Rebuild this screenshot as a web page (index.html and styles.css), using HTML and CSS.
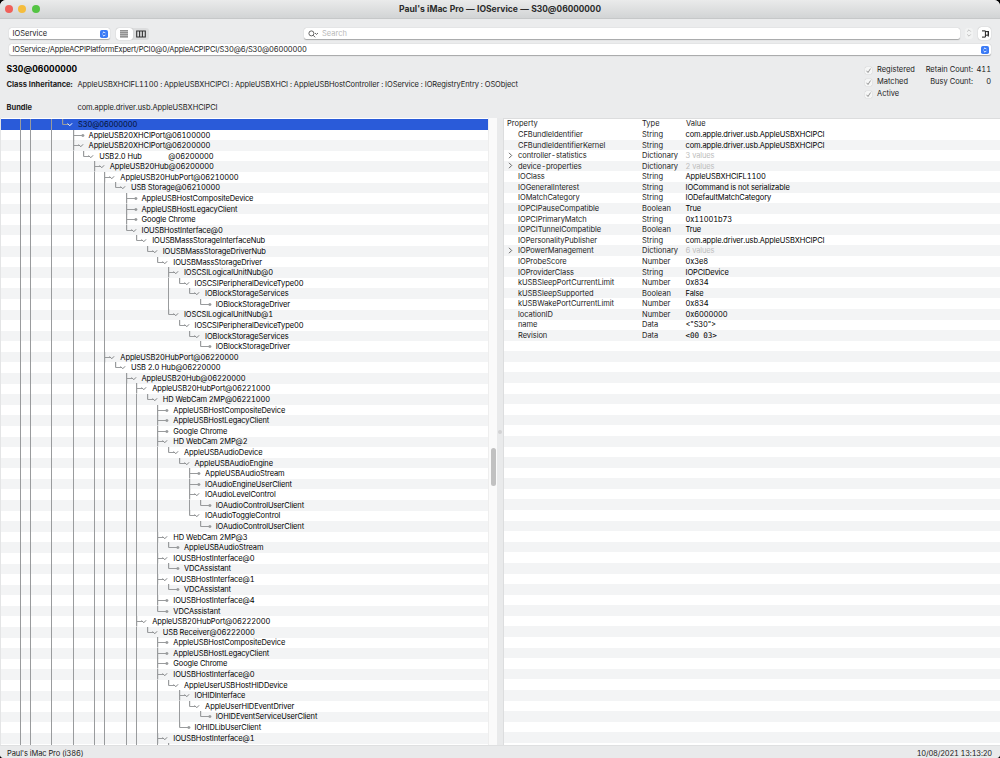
FILE: index.html
```html
<!DOCTYPE html>
<html lang="en">
<head>
    <meta charset="UTF-8">
    <meta name="viewport" content="width=device-width, initial-scale=1.0">
    <title>Paul's iMac Pro — IOService — S30@06000000</title>
    <link rel="stylesheet" href="styles.css">
</head>
<body>
    <div class="window">
        <div class="titlebar">
            <div class="lights">
                <span class="light red"></span>
                <span class="light yellow"></span>
                <span class="light green"></span>
            </div>
            <h1>Paul's iMac Pro — IOService — S30@06000000</h1>
        </div>

        <div class="toolbar">
            <div class="field plane">
                <span>IOService</span>
                <svg class="stepper" viewBox="0 0 8 8"><rect width="8" height="8" rx="1.8"/><path d="M2.6 3.2 4 1.8l1.4 1.4M2.6 4.8 4 6.2l1.4-1.4"/></svg>
            </div>
            <div class="segments">
                <span class="segment on"><svg width="8" height="8" viewBox="0 0 8 8"><path d="M0 .9h8M0 2.9h8M0 4.9h8M0 6.9h8" stroke="#4a4a4a"/></svg></span>
                <span class="segment"><svg width="10" height="8" viewBox="0 0 10 8"><path d="M.7 1h8.6v6H.7zM3.6 1v6M6.4 1v6" stroke="#333" stroke-width="1.1" fill="none"/></svg></span>
            </div>
            <div class="field search">
                <svg width="11" height="8" viewBox="0 0 11 8"><g fill="none" stroke="#555" stroke-width=".9"><circle cx="3.4" cy="3.4" r="2.5"/><path d="m5.2 5.3 2 2M7 3l1.5 1.4L10 3"/></g></svg>
                <span>Search</span>
            </div>
            <span class="updown"><svg width="6" height="10" viewBox="0 0 6 10"><path d="M1.2 3.6 3 1.8l1.8 1.8M1.2 6.4 3 8.2l1.8-1.8" fill="none" stroke="#b9b9b9" stroke-width=".9"/></svg></span>
            <span class="drawer"><svg width="8" height="8" viewBox="0 0 8 8"><path d="M1 .9h3.4v6.2H1M4.4 1.6h2.9v3.6H4.4M7.3 1v5.6" fill="none" stroke="#222" stroke-width="1"/></svg></span>
        </div>

        <div class="field path">
            <span>IOService:/AppleACPIPlatformExpert/PCI0@0/AppleACPIPCI/S30@6/S30@06000000</span>
            <svg class="stepper" viewBox="0 0 8 8"><rect width="8" height="8" rx="1.8"/><path d="M2.6 3.2 4 1.8l1.4 1.4M2.6 4.8 4 6.2l1.4-1.4"/></svg>
        </div>

        <div class="summary">
            <div class="info">
                <h2>S30@06000000</h2>
                <div class="info-row inherit"><b>Class Inheritance:</b><span>AppleUSBXHCIFL1100 : AppleUSBXHCIPCI : AppleUSBXHCI : AppleUSBHostController : IOService : IORegistryEntry : OSObject</span></div>
                <div class="info-row bundle"><b>Bundle</b><span>com.apple.driver.usb.AppleUSBXHCIPCI</span></div>
            </div>
            <div class="flags">
                <div><i class="check"><svg viewBox="0 0 7 7"><path d="m1.6 3.8 1.4 1.7L5.5 1.6"/></svg></i>Registered</div>
                <div><i class="check"><svg viewBox="0 0 7 7"><path d="m1.6 3.8 1.4 1.7L5.5 1.6"/></svg></i>Matched</div>
                <div><i class="check"><svg viewBox="0 0 7 7"><path d="m1.6 3.8 1.4 1.7L5.5 1.6"/></svg></i>Active</div>
            </div>
            <div class="counts">
                <div><span>Retain Count:</span><span class="num">411</span></div>
                <div><span>Busy Count:</span><span class="num">0</span></div>
            </div>
        </div>

        <div class="panes">
            <div class="tree" id="tree"></div>
            <div class="scroll"><div class="thumb"></div></div>
            <div class="splitter"><span></span></div>
            <div class="props">
                <div class="prop head"><span class="key">Property</span><span class="type">Type</span><span class="value">Value</span></div>
                <div class="prop-rows" id="props"></div>
            </div>
        </div>

        <div class="statusbar">
            <span class="host">Paul's iMac Pro (i386)</span>
            <span class="date">10/08/2021 13:13:20</span>
        </div>
    </div>
    <script src="script.js"></script>
</body>
</html>
```
FILE: styles.css
```css
* {
    box-sizing: border-box;
}

body {
    margin: 0;
    background: #000;
    font-family: Inter, "Liberation Sans", sans-serif;
    font-size: 7.5px;
    font-variant-numeric: tabular-nums;
    color: #222;
}

.window {
    display: flex;
    flex-direction: column;
    width: 1000px;
    height: 758px;
    overflow: hidden;
    background: #ebeced;
    border-radius: 6px 6px 4px 4px;
}

.titlebar {
    display: grid;
    grid-template-columns: 100px 1fr 100px;
    align-items: center;
    height: 19px;
    background: linear-gradient(#eaebeb, #d2d4d5);
    border-bottom: 1px solid #c6c8c9;
}

.titlebar h1 {
    margin: 0;
    text-align: center;
    font-size: 8.6px;
    font-weight: 700;
    letter-spacing: -.01px;
    color: #2b2b2b;
}

.lights {
    display: flex;
    gap: 5.3px;
    padding-left: 5px;
}

.light {
    width: 8px;
    height: 8px;
    border-radius: 50%;
}

.red { background: #f0605a; }
.yellow { background: #f5bd3d; }
.green { background: #54c443; }

.toolbar {
    display: flex;
    align-items: center;
    height: 15px;
    margin: 7px 9px 0 8.5px;
}

.field {
    display: flex;
    align-items: center;
    height: 11px;
    padding: 0 2px 0 4px;
    background: #fff;
    border-radius: 2.5px;
    box-shadow: 0 .5px 1px rgba(0, 0, 0, .3);
}

.plane {
    justify-content: space-between;
    width: 101.5px;
}

.stepper {
    width: 8px;
    height: 8px;
    flex: none;
}

.stepper rect { fill: #3b7bf6; }

.stepper path {
    fill: none;
    stroke: #fff;
    stroke-width: .9;
}

.segments {
    display: flex;
    width: 33px;
    height: 12px;
    margin-left: 6px;
    background: #dcddde;
    border-radius: 3px;
}

.segment {
    flex: 1;
    display: flex;
    align-items: center;
    justify-content: center;
}

.segment.on {
    background: #fff;
    border-radius: 3px;
    box-shadow: 0 0 1px rgba(0, 0, 0, .35);
}

.search {
    flex: 1;
    gap: 3px;
    margin-left: 155px;
    color: #b8b8b8;
}

.updown {
    display: flex;
    justify-content: center;
    width: 8px;
    height: 11px;
    margin-left: 5px;
    border-radius: 3px;
    background: #f2f3f3;
}

.drawer {
    display: flex;
    align-items: center;
    justify-content: center;
    width: 13px;
    height: 13px;
    margin-left: 5px;
    background: #fff;
    border-radius: 3.5px;
    box-shadow: 0 0 1px rgba(0, 0, 0, .35);
}

.path {
    justify-content: space-between;
    margin: 3px 9px 0 8.5px;
    letter-spacing: -.165px;
}

.summary {
    display: flex;
    height: 63px;
    padding: 8px 9px 0 6.5px;
}

.info {
    flex: 1;
}

.info h2 {
    margin: 0;
    font-size: 8.6px;
    line-height: 12px;
    font-weight: 700;
    letter-spacing: .06px;
    color: #000;
}

.info-row {
    display: flex;
    line-height: 11px;
}

.info-row b {
    width: 71px;
    font-weight: 700;
}

.info-row span { letter-spacing: -.08px; }

.inherit { margin-top: 4px; }
.bundle { margin-top: 12px; }

.flags,
.counts {
    padding-top: 1px;
    line-height: 12px;
}

.flags {
    width: 48px;
}

.flags div {
    display: flex;
    align-items: center;
}

.check {
    flex: none;
    width: 7px;
    height: 7px;
    margin-right: 5px;
    background: #f5f6f6;
    border-radius: 1.5px;
    box-shadow: 0 0 1px rgba(0, 0, 0, .3);
}

.check svg { display: block; }

.check path {
    fill: none;
    stroke: #8a8a8a;
    stroke-width: .9;
}

.counts {
    width: 78px;
}

.counts div {
    display: flex;
    justify-content: flex-end;
}

.num {
    width: 18px;
    text-align: right;
}

.panes {
    display: flex;
    height: 627px;
}

.tree,
.prop-rows {
    --row: 10.585px;
    background: repeating-linear-gradient(#f3f4f5 0 var(--row), #fff var(--row) calc(var(--row) * 2));
}

.tree {
    width: 488px;
    overflow: hidden;
    padding-top: 1px;
    background-position: 0 1px;
    border-left: 1px solid #e4e5e6;
    color: #000;
    letter-spacing: -.11px;
}

.row {
    display: flex;
    height: 10.585px;
    line-height: 11.8px;
    padding-left: 8px;
    white-space: pre;
}

.row.selected {
    background: #2a5bd9;
    color: #04102f;
}

.guide {
    flex: none;
    width: 10.6px;
}

.guide.line {
    border-left: 1.4px solid #999b9d;
}

.joint {
    flex: none;
    width: 16px;
    height: 10.585px;
    overflow: visible;
    fill: none;
    stroke: #999b9d;
}

.joint circle {
    fill: #999b9d;
    stroke: none;
}

.joint .chevron { stroke: #808284; }
.selected .chevron { stroke: #fff; }

.scroll {
    display: flex;
    justify-content: center;
    width: 9px;
    background: #fafafa;
    border-left: 1px solid #eee;
}

.thumb {
    width: 5px;
    height: 38px;
    margin-top: 330px;
    border-radius: 3px;
    background: #c1c1c1;
}

.splitter {
    display: flex;
    align-items: center;
    justify-content: center;
    width: 6px;
    background: #e9eaeb;
}

.splitter span {
    width: 4px;
    height: 4px;
    border-radius: 50%;
    background: #d3d3d4;
}

.props {
    flex: 1;
    display: flex;
    flex-direction: column;
    background: #fff;
    border-left: 1px solid #dcddde;
    border-top: 1px solid #dcddde;
}

.prop {
    display: flex;
    flex: none;
    height: 10.585px;
    line-height: 11.6px;
}

.prop.head {
    height: 10px;
    line-height: 9.6px;
    padding-left: 3px;
}

.head .key { width: 135px; }
.head .type { width: 44px; }

.prop-rows {
    flex: 1;
    background: repeating-linear-gradient(#fff 0 var(--row), #f3f4f5 var(--row) calc(var(--row) * 2));
}

.arrow {
    width: 14px;
    padding-left: 4px;
}

.arrow svg {
    display: block;
    margin-top: 1.5px;
}

.key { width: 124px; }
.type { width: 43.5px; }
.prop-rows .key { letter-spacing: -.06px; }
.prop-rows .value { color: #000; letter-spacing: -.11px; }
.prop-rows .value.dim { color: #bdbdbd; }
.prop-rows .value.mono { font-family: "DejaVu Sans Mono", monospace; font-size: 7.6px; }

.statusbar {
    display: flex;
    justify-content: space-between;
    height: 13px;
    line-height: 15px;
    padding: 0 8px 0 7px;
    background: #e9eaeb;
    border-top: 1px solid #dfe0e1;
}

.host { letter-spacing: -.1px; }
.date { letter-spacing: -.22px; }
```
FILE: script.js
```js
// depth, name, 1 when the entry has children
const entries = [
    [0, 'S30@06000000', 1],
    [1, 'AppleUSB20XHCIPort@06100000', 0],
    [1, 'AppleUSB20XHCIPort@06200000', 1],
    [2, 'USB2.0 Hub              @06200000', 1],
    [3, 'AppleUSB20Hub@06200000', 1],
    [4, 'AppleUSB20HubPort@06210000', 1],
    [5, 'USB Storage@06210000', 1],
    [6, 'AppleUSBHostCompositeDevice', 0],
    [6, 'AppleUSBHostLegacyClient', 0],
    [6, 'Google Chrome', 0],
    [6, 'IOUSBHostInterface@0', 1],
    [7, 'IOUSBMassStorageInterfaceNub', 1],
    [8, 'IOUSBMassStorageDriverNub', 1],
    [9, 'IOUSBMassStorageDriver', 1],
    [10, 'IOSCSILogicalUnitNub@0', 1],
    [11, 'IOSCSIPeripheralDeviceType00', 1],
    [12, 'IOBlockStorageServices', 1],
    [13, 'IOBlockStorageDriver', 0],
    [10, 'IOSCSILogicalUnitNub@1', 1],
    [11, 'IOSCSIPeripheralDeviceType00', 1],
    [12, 'IOBlockStorageServices', 1],
    [13, 'IOBlockStorageDriver', 0],
    [4, 'AppleUSB20HubPort@06220000', 1],
    [5, 'USB 2.0 Hub@06220000', 1],
    [6, 'AppleUSB20Hub@06220000', 1],
    [7, 'AppleUSB20HubPort@06221000', 1],
    [8, 'HD WebCam 2MP@06221000', 1],
    [9, 'AppleUSBHostCompositeDevice', 0],
    [9, 'AppleUSBHostLegacyClient', 0],
    [9, 'Google Chrome', 0],
    [9, 'HD WebCam 2MP@2', 1],
    [10, 'AppleUSBAudioDevice', 1],
    [11, 'AppleUSBAudioEngine', 1],
    [12, 'AppleUSBAudioStream', 0],
    [12, 'IOAudioEngineUserClient', 0],
    [12, 'IOAudioLevelControl', 1],
    [13, 'IOAudioControlUserClient', 0],
    [12, 'IOAudioToggleControl', 1],
    [13, 'IOAudioControlUserClient', 0],
    [9, 'HD WebCam 2MP@3', 1],
    [10, 'AppleUSBAudioStream', 0],
    [9, 'IOUSBHostInterface@0', 1],
    [10, 'VDCAssistant', 0],
    [9, 'IOUSBHostInterface@1', 1],
    [10, 'VDCAssistant', 0],
    [9, 'IOUSBHostInterface@4', 0],
    [9, 'VDCAssistant', 0],
    [7, 'AppleUSB20HubPort@06222000', 1],
    [8, 'USB Receiver@06222000', 1],
    [9, 'AppleUSBHostCompositeDevice', 0],
    [9, 'AppleUSBHostLegacyClient', 0],
    [9, 'Google Chrome', 0],
    [9, 'IOUSBHostInterface@0', 1],
    [10, 'AppleUserUSBHostHIDDevice', 1],
    [11, 'IOHIDInterface', 1],
    [12, 'AppleUserHIDEventDriver', 1],
    [13, 'IOHIDEventServiceUserClient', 0],
    [11, 'IOHIDLibUserClient', 0],
    [9, 'IOUSBHostInterface@1', 1],
    [10, '', 0]
];

// levels that carry on below the visible part of the tree
const openLevels = [-4, -3, -1, 1, 3, 4, 6, 7, 9];

const properties = [
    ['CFBundleIdentifier', 'String', 'com.apple.driver.usb.AppleUSBXHCIPCI'],
    ['CFBundleIdentifierKernel', 'String', 'com.apple.driver.usb.AppleUSBXHCIPCI'],
    ['controller-statistics', 'Dictionary', '3 values'],
    ['device-properties', 'Dictionary', '2 values'],
    ['IOClass', 'String', 'AppleUSBXHCIFL1100'],
    ['IOGeneralInterest', 'String', 'IOCommand is not serializable'],
    ['IOMatchCategory', 'String', 'IODefaultMatchCategory'],
    ['IOPCIPauseCompatible', 'Boolean', 'True'],
    ['IOPCIPrimaryMatch', 'String', '0x11001b73'],
    ['IOPCITunnelCompatible', 'Boolean', 'True'],
    ['IOPersonalityPublisher', 'String', 'com.apple.driver.usb.AppleUSBXHCIPCI'],
    ['IOPowerManagement', 'Dictionary', '6 values'],
    ['IOProbeScore', 'Number', '0x3e8'],
    ['IOProviderClass', 'String', 'IOPCIDevice'],
    ['kUSBSleepPortCurrentLimit', 'Number', '0x834'],
    ['kUSBSleepSupported', 'Boolean', 'False'],
    ['kUSBWakePortCurrentLimit', 'Number', '0x834'],
    ['locationID', 'Number', '0x6000000'],
    ['name', 'Data', '&lt;"S30"&gt;'],
    ['Revision', 'Data', '&lt;00 03&gt;']
];

function continues(index, level) {
    for (let i = index + 1; i < entries.length; i++) {
        if (entries[i][0] < level) return false;
        if (entries[i][0] === level) return true;
    }
    return openLevels.includes(level);
}

function joint(more, parent) {
    const end = parent ? 6 : 9;
    const tip = parent
        ? '<path class="chevron" d="m5.6 4.5 2.2 2.2 2.3-2.4"/>'
        : '<circle cx="9.9" cy="5.5" r="1.5"/>';
    return `<svg class="joint" viewBox="0 0 16 10.585"><path stroke-width="1.2" d="M.6 0v${more ? 10.6 : 5.5}M.6 5.5H${end}"/>${tip}</svg>`;
}

document.getElementById('tree').innerHTML = entries.map(([depth, name, parent], i) => {
    let html = '';
    for (let level = -5; level < depth; level++) {
        html += `<i class="guide${continues(i, level) ? ' line' : ''}"></i>`;
    }
    // the last entry is cut off by the pane, only its line shows
    html += joint(continues(i, depth), parent);
    return `<div class="row${i === 0 ? ' selected' : ''}">${html}<span>${name}</span></div>`;
}).join('');

document.getElementById('props').innerHTML = properties.map(([key, type, value]) => {
    const dict = type === 'Dictionary';
    const arrow = dict ? '<svg width="5" height="7" viewBox="0 0 5 7"><path d="m1 .8 2.7 2.7L1 6.2" fill="none" stroke="#555" stroke-width=".9"/></svg>' : '';
    const cls = dict ? ' dim' : key === 'Revision' ? ' mono' : '';
    return `<div class="prop"><span class="arrow">${arrow}</span><span class="key">${key}</span><span class="type">${type}</span><span class="value${cls}">${value}</span></div>`;
}).join('');
```
